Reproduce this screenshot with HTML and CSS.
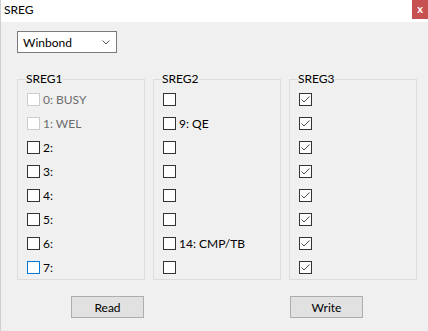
FILE: index.html
```html
<!DOCTYPE html>
<html lang="en">
<head>
  <meta charset="UTF-8">
  <title>SREG</title>
  <link rel="stylesheet" href="styles.css">
</head>
<body>
  <div class="window">
    <div class="titlebar">
      <span class="title">SREG</span>
      <span class="close">x</span>
    </div>
    <div class="content">
      <div class="select">
        <span>Winbond</span>
        <svg width="8" height="5" viewBox="0 0 8 5"><path d="M0.5 0.5 L4 4 L7.5 0.5" fill="none" stroke="#555" stroke-width="1"/></svg>
      </div>

      <div class="groups">
        <fieldset class="group">
          <legend>SREG1</legend>
          <div class="row disabled"><span class="box"></span><span>0: BUSY</span></div>
          <div class="row disabled"><span class="box"></span><span>1: WEL</span></div>
          <div class="row"><span class="box"></span><span>2:</span></div>
          <div class="row"><span class="box"></span><span>3:</span></div>
          <div class="row"><span class="box"></span><span>4:</span></div>
          <div class="row"><span class="box"></span><span>5:</span></div>
          <div class="row"><span class="box"></span><span>6:</span></div>
          <div class="row"><span class="box focus"></span><span>7:</span></div>
        </fieldset>

        <fieldset class="group">
          <legend>SREG2</legend>
          <div class="row"><span class="box"></span></div>
          <div class="row"><span class="box"></span><span>9: QE</span></div>
          <div class="row"><span class="box"></span></div>
          <div class="row"><span class="box"></span></div>
          <div class="row"><span class="box"></span></div>
          <div class="row"><span class="box"></span></div>
          <div class="row"><span class="box"></span><span>14: CMP/TB</span></div>
          <div class="row"><span class="box"></span></div>
        </fieldset>

        <fieldset class="group">
          <legend>SREG3</legend>
          <div class="row"><span class="box"><svg class="check" viewBox="0 0 11 11"><path d="M1.5 5.5 L4 8 L9.5 2.5" /></svg></span></div>
          <div class="row"><span class="box"><svg class="check" viewBox="0 0 11 11"><path d="M1.5 5.5 L4 8 L9.5 2.5" /></svg></span></div>
          <div class="row"><span class="box"><svg class="check" viewBox="0 0 11 11"><path d="M1.5 5.5 L4 8 L9.5 2.5" /></svg></span></div>
          <div class="row"><span class="box"><svg class="check" viewBox="0 0 11 11"><path d="M1.5 5.5 L4 8 L9.5 2.5" /></svg></span></div>
          <div class="row"><span class="box"><svg class="check" viewBox="0 0 11 11"><path d="M1.5 5.5 L4 8 L9.5 2.5" /></svg></span></div>
          <div class="row"><span class="box"><svg class="check" viewBox="0 0 11 11"><path d="M1.5 5.5 L4 8 L9.5 2.5" /></svg></span></div>
          <div class="row"><span class="box"><svg class="check" viewBox="0 0 11 11"><path d="M1.5 5.5 L4 8 L9.5 2.5" /></svg></span></div>
          <div class="row"><span class="box"><svg class="check" viewBox="0 0 11 11"><path d="M1.5 5.5 L4 8 L9.5 2.5" /></svg></span></div>
        </fieldset>
      </div>

      <div class="actions">
        <button class="btn">Read</button>
        <button class="btn">Write</button>
      </div>
    </div>
  </div>
</body>
</html>
```

FILE: styles.css
```css
body {
  margin: 0;
  background-color: #f0f0f0;
  font-family: Lato, "Liberation Sans", sans-serif;
  font-size: 12px;
  color: #000;
}
.window {
  height: 331px;
  border-left: 1px solid #cfcfcf;
}
.titlebar {
  display: flex;
  justify-content: space-between;
  align-items: flex-start;
  height: 22px;
  background-color: #fff;
}
.title {
  line-height: 19px;
  padding-left: 3px;
}
.close {
  width: 16px;
  height: 19px;
  line-height: 17px;
  text-align: center;
  background-color: #c75050;
  color: #fff;
  font-weight: bold;
  font-size: 11px;
}
.content {
  padding: 9px 0 0 16px;
}
/* Dropdown */
.select {
  display: flex;
  justify-content: space-between;
  align-items: center;
  box-sizing: border-box;
  width: 100px;
  height: 22px;
  padding: 0 6px 0 5px;
  border: 1px solid #7a7a7a;
  background-color: #fff;
}
/* Group boxes */
.groups {
  display: flex;
  gap: 8px;
  margin-top: 18px;
}
.group {
  box-sizing: border-box;
  width: 128px;
  margin: 0;
  padding: 0 0 0 9px;
  border: 1px solid #dcdcdc;
}
.group legend {
  padding: 0;
  margin-left: -1px;
  line-height: 16px;
}
.row {
  display: flex;
  align-items: center;
  gap: 3px;
  height: 24px;
}
.box {
  display: flex;
  box-sizing: border-box;
  width: 13px;
  height: 13px;
  border: 1px solid #333;
  background-color: #fff;
}
.row.disabled {
  color: #6d6d6d;
}
.row.disabled .box {
  border-color: #cccccc;
}
.box.focus {
  border-color: #0078d7;
}
.check {
  width: 11px;
  height: 11px;
  fill: none;
  stroke: #444;
  stroke-width: 1;
}
/* Buttons */
.actions {
  display: flex;
  gap: 146px;
  margin: 16px 0 0 54px;
}
.btn {
  box-sizing: border-box;
  width: 73px;
  height: 22px;
  padding: 0;
  border: 1px solid #adadad;
  background-color: #e1e1e1;
  font-family: inherit;
  font-size: 12px;
  color: #000;
}
```
